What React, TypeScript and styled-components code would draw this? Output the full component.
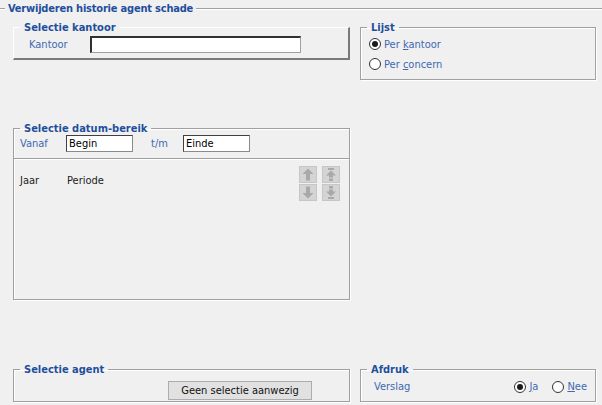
import React from "react";
import styled, { createGlobalStyle } from "styled-components";

const Global = createGlobalStyle`
  html, body { margin: 0; padding: 0; background: #f0f0f0; }
  body {
    width: 602px; height: 405px; overflow: hidden;
    font-family: "DejaVu Sans Condensed", "DejaVu Sans", Verdana, sans-serif;
    font-size: 11px; color: #222;
  }
`;

const Page = styled.div`
  width: 602px;
  height: 405px;
  display: flex;
  flex-direction: column;
`;

const TitleBar = styled.div`
  display: flex;
  align-items: center;
  height: 17px;
  gap: 3px;
`;

const Etch = styled.div<{ $w?: number }>`
  height: 1px;
  background: #a0a0a0;
  border-bottom: 1px solid #ffffff;
  ${(p) => (p.$w ? `width: ${p.$w}px;` : "flex: 1;")}
`;

const Title = styled.span`
  font-weight: bold;
  color: #1f4f9c;
  letter-spacing: -0.2px;
`;

const Grid = styled.div`
  display: grid;
  grid-template-columns: 337px 236px;
  column-gap: 10px;
  padding-left: 13px;
`;

const Group = styled.fieldset<{ $h: number; $raised?: boolean; $top: number }>`
  margin: ${(p) => p.$top}px 0 0 0;
  padding: 0;
  min-width: 0;
  height: ${(p) => p.$h}px;
  box-sizing: border-box;
  ${(p) =>
    p.$raised
      ? `
    border-style: solid;
    border-width: 1px 2px 2px 1px;
    border-color: #ffffff #7a7a7a #7a7a7a #ffffff;
  `
      : `
    border: 1px solid #a0a0a0;
    box-shadow: 1px 1px 0 #ffffff, inset 1px 1px 0 #ffffff;
  `}
`;

const Legend = styled.legend`
  margin-left: 6px;
  padding: 0 4px;
  font-weight: bold;
  color: #1f4f9c;
  line-height: 13px;
`;

const Row = styled.div<{ $pl: number; $h: number; $pt?: number }>`
  display: flex;
  align-items: center;
  height: ${(p) => p.$h}px;
  padding-left: ${(p) => p.$pl}px;
  padding-top: ${(p) => p.$pt ?? 0}px;
`;

const Label = styled.span<{ $w?: number; $dark?: boolean }>`
  color: ${(p) => (p.$dark ? "#222" : "#4169b1")};
  ${(p) => (p.$w ? `width: ${p.$w}px; flex: none;` : "")}
`;

const TextBox = styled.div<{ $w: number; $sunken?: boolean }>`
  width: ${(p) => p.$w}px;
  height: 17px;
  box-sizing: border-box;
  background: #ffffff;
  padding-left: 2px;
  display: flex;
  align-items: center;
  color: #000;
  ${(p) =>
    p.$sunken
      ? `border-style: solid; border-width: 2px 1px 1px 2px; border-color: #303030 #a0a0a0 #a0a0a0 #303030;`
      : `border: 1px solid #404040; border-right-color: #8a8a8a; border-bottom-color: #8a8a8a;`}
`;

const Separator = styled.div`
  height: 1px;
  background: #a0a0a0;
  border-bottom: 1px solid #ffffff;
  margin-top: 6px;
`;

const ListArea = styled.div`
  display: flex;
  justify-content: space-between;
  padding: 5px 9px 0 6px;
`;

const ListHead = styled.div`
  display: flex;
  padding-top: 9px;
`;

const ArrowGrid = styled.div`
  display: grid;
  grid-template-columns: 18px 18px;
  grid-auto-rows: 17px;
  column-gap: 5px;
  row-gap: 1px;
  margin-top: 1px;
`;

const ArrowBtn = styled.div`
  background: #d4d4d4;
  border: 1px solid #c6c6c6;
  box-sizing: border-box;
  display: flex;
  align-items: center;
  justify-content: center;
`;

const RadioList = styled.div`
  display: flex;
  flex-direction: column;
  gap: 8px;
  padding: 4px 0 0 8px;
`;

const RadioItem = styled.label<{ $ml?: number; $mr?: number }>`
  display: flex;
  align-items: center;
  gap: 3px;
  color: #4169b1;
  height: 12px;
  margin-left: ${(p) => p.$ml ?? 0}px;
  margin-right: ${(p) => p.$mr ?? 0}px;
`;

const Circle = styled.span<{ $on?: boolean }>`
  width: 12px;
  height: 12px;
  box-sizing: border-box;
  border-radius: 50%;
  border: 1px solid #333;
  background: #fff;
  display: flex;
  align-items: center;
  justify-content: center;
  flex: none;
  &::after {
    content: "";
    width: 6px;
    height: 6px;
    border-radius: 50%;
    background: ${(p) => (p.$on ? "#1a1a1a" : "transparent")};
  }
`;

const Key = styled.span`
  text-decoration: underline;
`;

const Button = styled.div`
  margin-left: auto;
  margin-right: 37px;
  width: 144px;
  height: 19px;
  box-sizing: border-box;
  background: #e1e1e1;
  border: 1px solid #adadad;
  display: flex;
  align-items: center;
  justify-content: center;
  color: #111;
`;

const Spacer = styled.div`
  flex: 1;
`;

const Arrow = ({ up, stop }: { up?: boolean; stop?: boolean }) => (
  <svg width="12" height="13" viewBox="0 0 12 13" style={up ? undefined : { transform: "rotate(180deg)" }}>
    {stop && <rect x="3" y="0" width="6" height="2" fill="#a9a9a9" />}
    <path d={stop ? "M6 2.5 L11 7.5 L8 7.5 L8 13 L4 13 L4 7.5 L1 7.5 Z" : "M6 0.5 L11.5 6 L8 6 L8 12.5 L4 12.5 L4 6 L0.5 6 Z"} fill="#a9a9a9" />
    {stop && <rect x="4" y="9.5" width="4" height="1" fill="#d4d4d4" />}
  </svg>
);

export default function App() {
  return (
    <Page>
      <Global />
      <TitleBar>
        <Etch $w={5} />
        <Title>Verwijderen historie agent schade</Title>
        <Etch />
      </TitleBar>
      <Grid>
        <Group $raised $h={39} $top={4}>
          <Legend>Selectie kantoor</Legend>
          <Row $pl={15} $h={19} $pt={1}>
            <Label $w={61}>Kantoor</Label>
            <TextBox $w={211} $sunken />
          </Row>
        </Group>
        <Group $h={59} $top={4}>
          <Legend>Lijst</Legend>
          <RadioList>
            <RadioItem>
              <Circle $on />
              <span>Per <Key>k</Key>antoor</span>
            </RadioItem>
            <RadioItem>
              <Circle />
              <span>Per <Key>c</Key>oncern</span>
            </RadioItem>
          </RadioList>
        </Group>

        <Group $h={178} $top={42}>
          <Legend>Selectie datum-bereik</Legend>
          <Row $pl={6} $h={17}>
            <Label $w={46}>Vanaf</Label>
            <TextBox $w={67}>Begin</TextBox>
            <Label $w={32} style={{ marginLeft: 18 }}>t/m</Label>
            <TextBox $w={67}>Einde</TextBox>
          </Row>
          <Separator />
          <ListArea>
            <ListHead>
              <Label $dark $w={47}>Jaar</Label>
              <Label $dark>Periode</Label>
            </ListHead>
            <ArrowGrid>
              <ArrowBtn><Arrow up /></ArrowBtn>
              <ArrowBtn><Arrow up stop /></ArrowBtn>
              <ArrowBtn><Arrow /></ArrowBtn>
              <ArrowBtn><Arrow stop /></ArrowBtn>
            </ArrowGrid>
          </ListArea>
        </Group>
        <Spacer />

        <Group $h={39} $top={63}>
          <Legend>Selectie agent</Legend>
          <Row $pl={6} $h={23} $pt={3}>
            <Button>Geen selectie aanwezig</Button>
          </Row>
        </Group>
        <Group $h={39} $top={63}>
          <Legend>Afdruk</Legend>
          <Row $pl={13} $h={21}>
            <Label>Verslag</Label>
            <Spacer />
            <RadioItem>
              <Circle $on />
              <span><Key>J</Key>a</span>
            </RadioItem>
            <RadioItem $ml={14} $mr={8}>
              <Circle />
              <span><Key>N</Key>ee</span>
            </RadioItem>
          </Row>
        </Group>
      </Grid>
    </Page>
  );
}
